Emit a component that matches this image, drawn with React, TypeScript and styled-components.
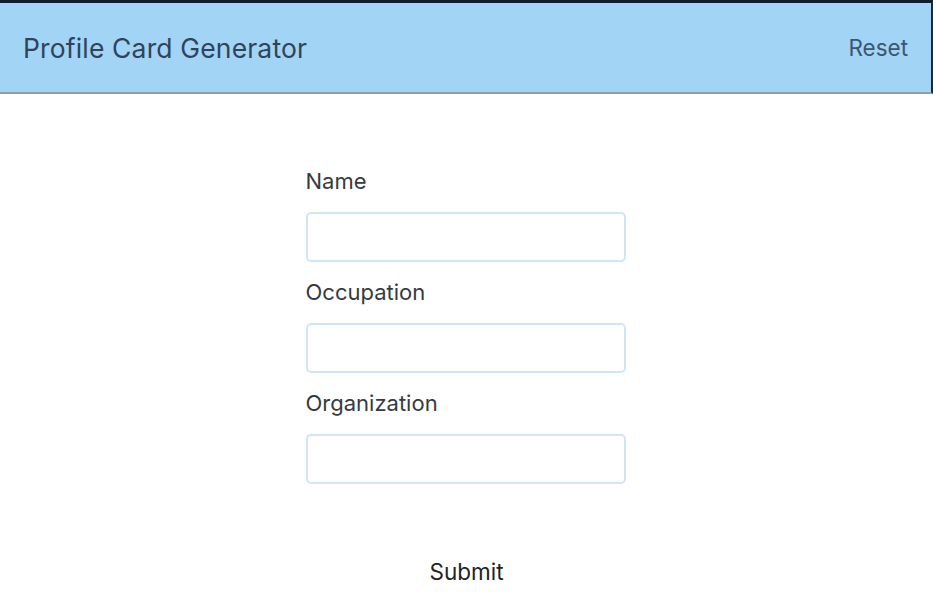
import React, { useState } from 'react';
import styled, { createGlobalStyle } from 'styled-components';

const GlobalStyle = createGlobalStyle`
  html, body {
    margin: 0;
    padding: 0;
    background: #ffffff;
    font-family: "Inter", "Liberation Sans", Arial, sans-serif;
  }
`;

const Page = styled.div`
  width: 933px;
  height: 613px;
  display: flex;
  flex-direction: column;
  background: #ffffff;
  overflow: hidden;
`;

// barre du haut
const Header = styled.header`
  height: 89px;
  display: flex;
  align-items: center;
  justify-content: space-between;
  padding: 0 24px 0 24px;
  background: #a2d4f6;
  border-top: 3px solid #0f1d2e;
  border-right: 2px solid #1a2838;
  border-bottom: 2px solid #8e9eac;
`;

const Title = styled.h1`
  margin: 0 0 0 -1px;
  font-size: 26.5px;
  font-weight: 400;
  color: #30435a;
  letter-spacing: 0.15px;
`;

const ResetButton = styled.button`
  border: none;
  background: none;
  padding: 0;
  font-family: inherit;
  font-size: 22.5px;
  color: #3d5670;
  cursor: pointer;
  margin-right: -1px;
`;

const Form = styled.form`
  display: flex;
  flex-direction: column;
  align-items: center;
  padding-top: 74px;
`;

const Fields = styled.div`
  width: 320px;
  display: flex;
  flex-direction: column;
`;

const Field = styled.label`
  display: flex;
  flex-direction: column;
  margin-bottom: 17px;
`;

const Label = styled.span`
  font-size: 22px;
  color: #363a42;
  line-height: 26px;
  margin-bottom: 18px;
  margin-left: -1px;
`;

const Input = styled.input`
  box-sizing: border-box;
  width: 320px;
  height: 50px;
  border: 2px solid #d0e6f8;
  border-radius: 5px;
  outline: none;
  padding: 0 10px;
  font-family: inherit;
  font-size: 18px;
  margin-left: -1px;
`;

const Submit = styled.button`
  margin-top: 57px;
  border: none;
  background: none;
  padding: 0;
  font-family: inherit;
  font-size: 22.5px;
  line-height: 27px;
  color: #1f2328;
  cursor: pointer;
`;

const fields = ['Name', 'Occupation', 'Organization'];

export default function App() {
  const [values, setValues] = useState<Record<string, string>>({});

  return (
    <Page>
      <GlobalStyle />
      <Header>
        <Title>Profile Card Generator</Title>
        <ResetButton onClick={() => setValues({})}>Reset</ResetButton>
      </Header>
      <Form onSubmit={e => e.preventDefault()}>
        <Fields>
          {fields.map(f => (
            <Field key={f}>
              <Label>{f}</Label>
              <Input
                value={values[f] || ''}
                onChange={e => setValues({ ...values, [f]: e.target.value })}
              />
            </Field>
          ))}
        </Fields>
        <Submit type="submit">Submit</Submit>
      </Form>
    </Page>
  );
}
